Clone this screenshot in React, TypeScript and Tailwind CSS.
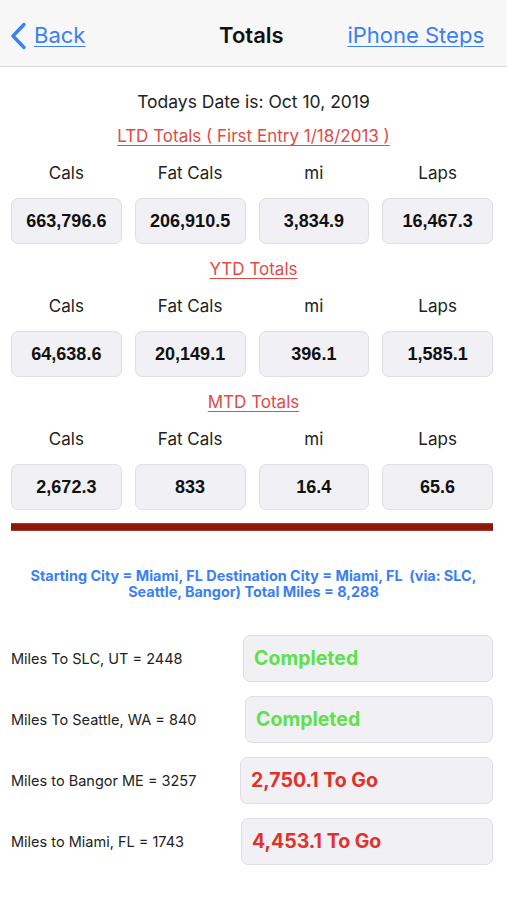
import React from "react";

const sans = { fontFamily: "Inter, 'Noto Sans', sans-serif" };

function Section({ title, values }: { title: string; values: string[] }) {
  const labels = ["Cals", "Fat Cals", "mi", "Laps"];
  return (
    <div className="flex flex-col">
      <div className="h-[24px] flex items-center justify-center">
        <span className="text-[17px] text-[#e04b46] underline underline-offset-[3px] decoration-1">{title}</span>
      </div>
      <div className="mt-[12px] grid grid-cols-4 gap-[13px] pl-[11px] pr-[14px] h-[24px]">
        {labels.map((l) => (
          <div key={l} className="flex items-center justify-center text-[17px] text-[#222]">{l}</div>
        ))}
      </div>
      <div className="mt-[13px] grid grid-cols-4 gap-[13px] pl-[11px] pr-[14px]">
        {values.map((v, i) => (
          <div
            key={i}
            className="h-[46px] rounded-[7px] bg-[#f1f1f5] border border-[#dedee3] flex items-center justify-center text-[18px] font-bold text-[#111]"
            style={{ fontFamily: "'Liberation Sans', Arial, sans-serif" }}
          >
            {v}
          </div>
        ))}
      </div>
    </div>
  );
}

function Row({ label, value, done, w }: { label: string; value: string; done: boolean; w: string }) {
  return (
    <div className="flex items-center justify-between pl-[11px] pr-[14px] h-[47px]">
      <span className="text-[14.5px] text-[#222]">{label}</span>
      <div className={`${w} h-[47px] rounded-[7px] bg-[#f1f1f5] border border-[#dedee3] flex items-center pl-[10px]`}>
        <span className={`text-[19.5px] font-bold ${done ? "text-[#5fe04c]" : "text-[#e2302a]"}`}>{value}</span>
      </div>
    </div>
  );
}

export default function App() {
  return (
    <div className="w-[507px] h-[900px] bg-white overflow-hidden" style={sans}>
      <div className="h-[67px] bg-[#f7f7f7] border-b border-[#d9d9d9] flex items-center justify-between pl-[9px] pr-[23px] pt-[5px]">
        <div className="flex items-center gap-[5px]">
          <svg width="20" height="28" viewBox="0 0 20 28" fill="none">
            <path d="M15 2.5 L4 14 L15 25.5" stroke="#3a7ff6" strokeWidth="3.4" strokeLinecap="round" strokeLinejoin="round" />
          </svg>
          <span className="text-[22px] text-[#3a7ff6] underline underline-offset-[3px] decoration-1">Back</span>
        </div>
        <span className="text-[22px] font-semibold text-[#111] ml-[70px]">Totals</span>
        <span className="text-[22px] text-[#3a7ff6] underline underline-offset-[3px] decoration-1">iPhone Steps</span>
      </div>

      <div className="mt-[22px] h-[26px] flex items-center justify-center text-[17.5px] text-[#222]">
        Todays Date is: Oct 10, 2019
      </div>

      <div className="mt-[10px] flex flex-col gap-[14px]">
        <Section title="LTD Totals ( First Entry 1/18/2013 )" values={["663,796.6", "206,910.5", "3,834.9", "16,467.3"]} />
        <Section title="YTD Totals" values={["64,638.6", "20,149.1", "396.1", "1,585.1"]} />
        <Section title="MTD Totals" values={["2,672.3", "833", "16.4", "65.6"]} />
      </div>

      <div className="ml-[11px] mr-[14px] mt-[13px] h-[8px] bg-[#8b1a0c] border-y border-[#a8392c]" />

      <div className="mt-[37px] text-center text-[14.4px] font-bold leading-[16px] text-[#3a7ff6]">
        Starting City = Miami, FL Destination City = Miami, FL&nbsp; (via: SLC,
        <br />
        Seattle, Bangor) Total Miles = 8,288
      </div>

      <div className="mt-[35px] flex flex-col gap-[14px]">
        <Row label="Miles To SLC, UT = 2448" value="Completed" done w="w-[250px]" />
        <Row label="Miles To Seattle, WA = 840" value="Completed" done w="w-[248px]" />
        <Row label="Miles to Bangor ME = 3257" value="2,750.1 To Go" done={false} w="w-[253px]" />
        <Row label="Miles to Miami, FL = 1743" value="4,453.1 To Go" done={false} w="w-[252px]" />
      </div>
    </div>
  );
}
